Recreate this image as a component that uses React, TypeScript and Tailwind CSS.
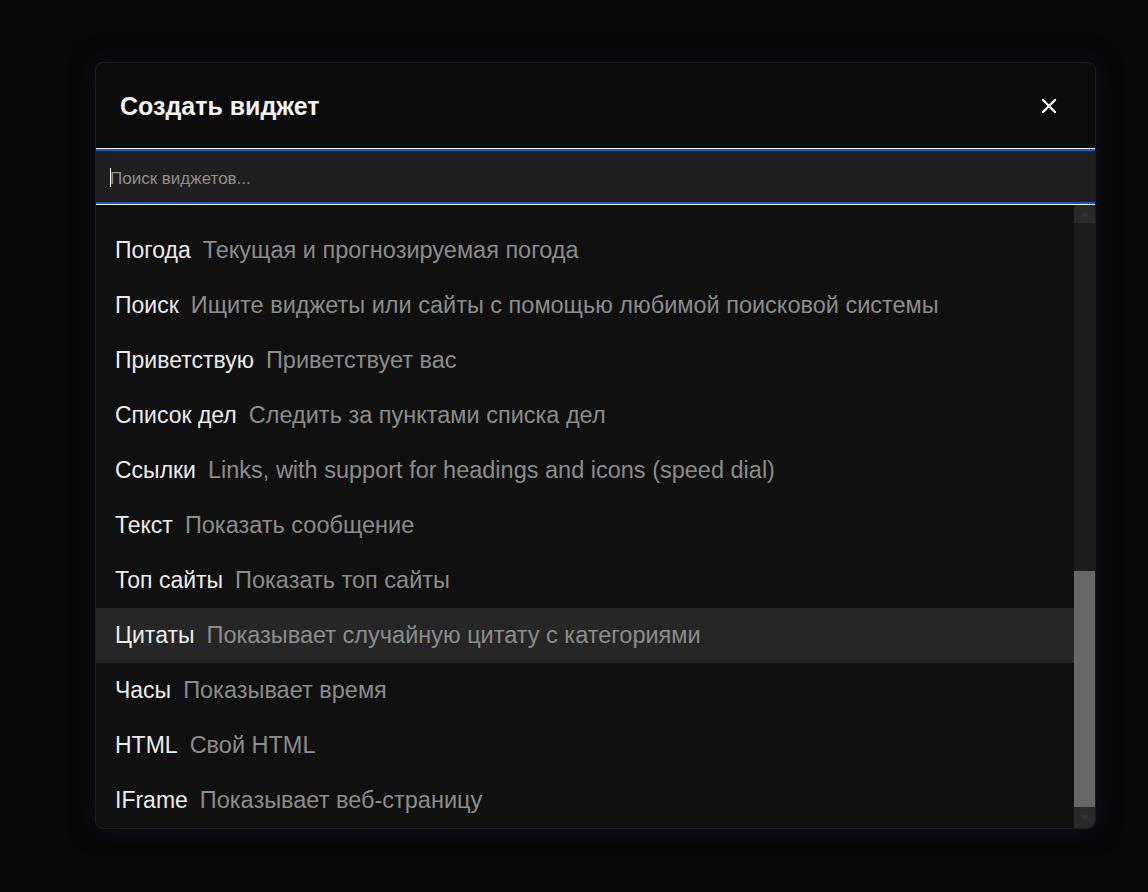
import { X } from 'lucide-react';

type Widget = {
  name: string;
  description: string;
};

// Tail end of the widget catalogue; the list is pinned to its bottom
const WIDGETS: Widget[] = [
  { name: 'Погода', description: 'Текущая и прогнозируемая погода' },
  { name: 'Поиск', description: 'Ищите виджеты или сайты с помощью любимой поисковой системы' },
  { name: 'Приветствую', description: 'Приветствует вас' },
  { name: 'Список дел', description: 'Следить за пунктами списка дел' },
  { name: 'Ссылки', description: 'Links, with support for headings and icons (speed dial)' },
  { name: 'Текст', description: 'Показать сообщение' },
  { name: 'Топ сайты', description: 'Показать топ сайты' },
  { name: 'Цитаты', description: 'Показывает случайную цитату с категориями' },
  { name: 'Часы', description: 'Показывает время' },
  { name: 'HTML', description: 'Свой HTML' },
  { name: 'IFrame', description: 'Показывает веб-страницу' },
];

const HOVERED = 'Цитаты';

function WidgetRow({ widget }: { widget: Widget }) {
  const active = widget.name === HOVERED;
  return (
    <div
      className={
        'flex h-[55px] shrink-0 items-center gap-3 whitespace-nowrap pl-[19px] pr-4 leading-none ' +
        (active ? 'bg-[#262626]' : '')
      }
    >
      <span className="text-[23px] text-[#ececec]">{widget.name}</span>
      <span className="text-[23.5px] text-[#8c8c8c]">{widget.description}</span>
    </div>
  );
}

function ScrollBar() {
  return (
    <div className="flex w-[21px] shrink-0 flex-col bg-[#1c1c1c]">
      <div className="flex h-[18px] items-center justify-center bg-[#2a2a2a]">
        <svg width="9" height="5" viewBox="0 0 9 5">
          <path d="M0 5 L4.5 0 L9 5 Z" fill="#323232" />
        </svg>
      </div>
      <div className="flex flex-1 flex-col justify-end">
        <div className="h-[236px] bg-[#676767]" />
      </div>
      <div className="flex h-[21px] items-center justify-center rounded-br-lg bg-[#2a2a2a]">
        <svg width="9" height="5" viewBox="0 0 9 5">
          <path d="M0 0 L4.5 5 L9 0 Z" fill="#323232" />
        </svg>
      </div>
    </div>
  );
}

export default function App() {
  return (
    <div className="min-h-screen bg-[#080808] pl-[95px] pt-[62px] font-['Liberation_Sans',Arial,sans-serif]">
      <div className="flex h-[767px] w-[1001px] flex-col overflow-hidden rounded-lg border border-[#1d1d1f] bg-[#0b0b0b] shadow-[0_0_24px_rgba(16,16,44,0.55)]">
        <div className="flex h-[85px] shrink-0 items-center justify-between pl-6 pr-[34px]">
          <h2 className="pt-[2px] text-[25px] font-bold text-[#f2f2f2]">Создать виджет</h2>
          <button className="flex h-6 w-6 items-center justify-center text-white">
            <X className="h-6 w-6" strokeWidth={2.3} />
          </button>
        </div>

        {/* focused search field, ring drawn as top/bottom bands */}
        <div className="flex shrink-0 flex-col">
          <div className="h-px bg-white" />
          <div className="h-[2px] bg-[#0a5cd8]" />
          <div className="relative flex h-[51px] items-center bg-[#1f1f1f] pl-[14px] pt-[4px]">
            <span className="absolute left-[14px] top-[17px] h-[19px] w-px bg-white" />
            <input
              placeholder="Поиск виджетов..."
              className="w-full bg-transparent text-[17px] text-[#d0d0d0] outline-none placeholder:text-[#8e8e8e]"
            />
          </div>
          <div className="h-[2px] bg-[#0a5cd8]" />
          <div className="h-px bg-white" />
        </div>

        <div className="flex min-h-0 flex-1 bg-[#101010]">
          <div className="flex min-w-0 flex-1 flex-col justify-end overflow-hidden">
            {WIDGETS.map((w) => (
              <WidgetRow key={w.name} widget={w} />
            ))}
          </div>
          <ScrollBar />
        </div>
      </div>
    </div>
  );
}
